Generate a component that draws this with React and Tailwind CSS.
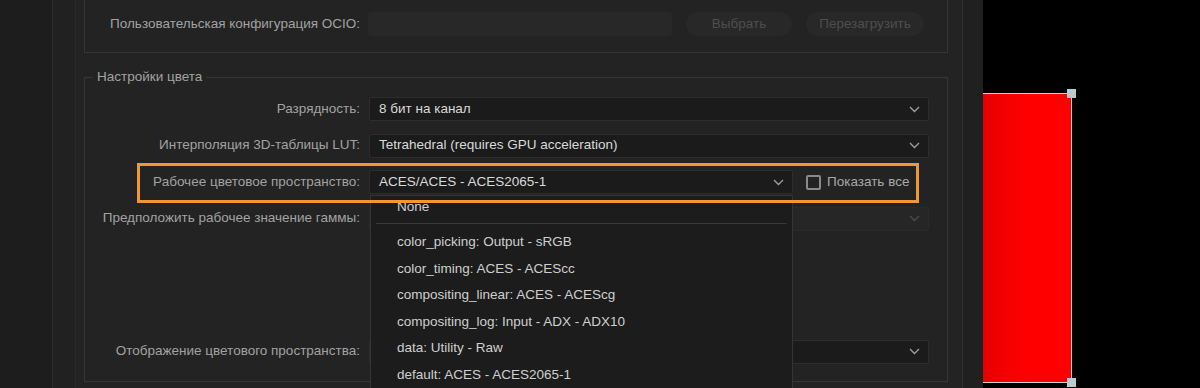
import React from "react";

function Chevron({ className = "", color = "#9d9d9d" }) {
  return (
    <svg width="11" height="7" viewBox="0 0 11 7" className={className}>
      <polyline points="1,1 5.5,5.5 10,1" fill="none" stroke={color} strokeWidth="1.4" />
    </svg>
  );
}

function Row({ label, children, className = "" }) {
  return (
    <div className={"flex items-center h-[24px] " + className}>
      <div className="w-[275px] pr-0 text-right text-[#a2a2a2] whitespace-nowrap">{label}</div>
      <div className="ml-[9px] flex items-center">{children}</div>
    </div>
  );
}

function Select({ value, width = "w-[560px]", disabled = false }) {
  return (
    <div
      className={
        "h-[24px] flex items-center justify-between pl-[9px] pr-[8px] rounded-[2px] border " +
        width +
        (disabled ? " bg-[#262626] border-[#2a2a2a]" : " bg-[#1b1b1b] border-[#2d2d2d]")
      }
    >
      <span className="text-[#d9d9d9] whitespace-nowrap">{value}</span>
      <Chevron color={disabled ? "#4c4c4c" : "#9d9d9d"} />
    </div>
  );
}

const items = [
  "color_picking: Output - sRGB",
  "color_timing: ACES - ACEScc",
  "compositing_linear: ACES - ACEScg",
  "compositing_log: Input - ADX - ADX10",
  "data: Utility - Raw",
  "default: ACES - ACES2065-1",
];

export default function App() {
  return (
    <div
      className="w-[1200px] h-[388px] overflow-hidden flex bg-black relative text-[13.5px]"
      style={{ fontFamily: '"Liberation Sans", Arial, sans-serif' }}
    >
      <div className="w-[53px] shrink-0 bg-[#1d1d1d] border-r border-[#2c2c2c]" />
      <div className="w-[23px] shrink-0 bg-[#212121] border-r border-[#2b2b2b]" />
      <div className="w-[887px] shrink-0 bg-[#232323] border-r border-[#303030] pl-[8px]">
        {/* OCIO group */}
        <div className="w-[864px] border-x border-b border-[#353535] pt-[12px] pb-[16px]">
          <div className="flex items-center h-[24px]">
            <div className="w-[275px] text-right text-[#a2a2a2] whitespace-nowrap">
              Пользовательская конфигурация OCIO:
            </div>
            <div className="ml-[8px] w-[304px] h-[24px] rounded-[4px] bg-[#282828]" />
            <div className="ml-[14px] w-[106px] h-[24px] rounded-full bg-[#282828] flex items-center justify-center text-[#4e4e4e]">
              Выбрать
            </div>
            <div className="ml-[14px] w-[118px] h-[24px] rounded-full bg-[#282828] flex items-center justify-center text-[#4e4e4e]">
              Перезагрузить
            </div>
          </div>
        </div>

        {/* Color settings group */}
        <fieldset className="mt-[14px] w-[864px] border border-[#353535] pb-[17px]">
          <legend className="ml-[8px] px-[4px] leading-[20px] text-[#a2a2a2]">Настройки цвета</legend>
          <div className="pt-[10px] flex flex-col gap-[12.5px]">
            <Row label="Разрядность:">
              <Select value="8 бит на канал" />
            </Row>
            <Row label="Интерполяция 3D-таблицы LUT:">
              <Select value="Tetrahedral (requires GPU acceleration)" />
            </Row>
            <Row label="Рабочее цветовое пространство:">
              <Select value="ACES/ACES - ACES2065-1" width="w-[424px]" />
              <div className="ml-[13px] w-[15px] h-[15px] rounded-[2px] border-2 border-[#8a8a8a]" />
              <span className="ml-[6px] text-[#a8a8a8] whitespace-nowrap">Показать все</span>
            </Row>
            <Row label="Предположить рабочее значение гаммы:">
              <Select value="" disabled />
            </Row>
          </div>
          <div className="mt-[109px]">
            <Row label="Отображение цветового пространства:">
              <Select value="" />
            </Row>
          </div>
        </fieldset>
      </div>
      <div className="w-[20px] shrink-0 bg-[#202020]" />

      {/* Canvas */}
      <div className="flex-1 bg-black pt-[93px]">
        <div className="relative w-[89px] h-[290px] border-t border-r border-b border-[#c6d0d0] bg-gradient-to-r from-[#e80000] via-[#ff0000] to-[#ff0000]">
          <div className="absolute -right-[5px] -top-[5px] w-[9px] h-[9px] bg-[#b7cccc]" />
          <div className="absolute -right-[5px] -bottom-[5px] w-[9px] h-[9px] bg-[#b7cccc]" />
        </div>
      </div>

      {/* Dropdown list overlay */}
      <div className="absolute left-[370px] top-[195px] w-[423px] h-[200px] bg-[#1c1c1c] border border-[#353535] overflow-hidden text-[#cfcfcf]">
        <div className="h-[26px] flex items-center pl-[26px] -mt-[2px]">None</div>
        <div className="mt-[3px] mx-[5px] h-px bg-[#393939]" />
        <div className="mt-[5px]">
          {items.map((t) => (
            <div key={t} className="h-[26.5px] flex items-center pl-[26px] whitespace-nowrap">
              {t}
            </div>
          ))}
        </div>
      </div>

      {/* Orange annotation */}
      <div className="absolute left-[137px] top-[163px] w-[782px] h-[40px] border-[3px] border-[#f29833] pointer-events-none" />
    </div>
  );
}
